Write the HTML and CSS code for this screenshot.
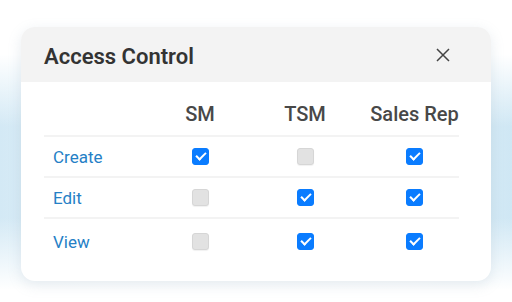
FILE: index.html
```html
<!doctype html>
<html>
	<head>
		<meta charset="utf-8" />
		<title>Access Control</title>
		<link rel="stylesheet" href="styles.css">
	</head>
	<body>
		<div class="stage">
			<div class="card">
				<header class="card_head">
					<h3>Access Control</h3>
					<button class="close" aria-label="Close">
						<svg width="14" height="14" viewBox="0 0 14 14"><path d="M1 1L13 13M13 1L1 13" stroke="#444" stroke-width="1.5" fill="none"/></svg>
					</button>
				</header>
				<div class="grid">
					<div class="cell head"></div>
					<div class="cell head mid">SM</div>
					<div class="cell head mid">TSM</div>
					<div class="cell head mid">Sales Rep</div>

					<div class="cell label">Create</div>
					<div class="cell mid"><span class="box on"></span></div>
					<div class="cell mid"><span class="box"></span></div>
					<div class="cell mid"><span class="box on"></span></div>

					<div class="cell label">Edit</div>
					<div class="cell mid"><span class="box"></span></div>
					<div class="cell mid"><span class="box on"></span></div>
					<div class="cell mid"><span class="box on"></span></div>

					<div class="cell label last">View</div>
					<div class="cell mid last"><span class="box"></span></div>
					<div class="cell mid last"><span class="box on"></span></div>
					<div class="cell mid last"><span class="box on"></span></div>
				</div>
			</div>
		</div>
	</body>
</html>
```
FILE: styles.css
```css
html, body {
	margin : 0;
	padding : 0;
}
body {
	width : 512px;
	height : 302px;
	overflow : hidden;
	font-family : Roboto, "Liberation Sans", sans-serif;
	background :
		linear-gradient(to bottom, rgba(255,255,255,1) 18%, rgba(255,255,255,0) 42%, rgba(255,255,255,0) 72%, rgba(255,255,255,1) 96%),
		linear-gradient(to right, #d3e9f5 0%, #e8f3fa 20%, #e8f3fa 80%, #cfe7f4 100%);
}
.stage {
	padding : 27px 21px 0 21px;
}
.card {
	width : 470px;
	height : 254px;
	background : #ffffff;
	border-radius : 14px;
	overflow : hidden;
	box-shadow : 0 4px 14px rgba(120, 150, 170, 0.18);
}
.card_head {
	height : 55px;
	background : #f3f3f3;
	display : flex;
	align-items : center;
	justify-content : space-between;
	padding : 0 41px 0 23px;
}
.card_head h3 {
	margin : 4px 0 0 0;
	font-size : 22px;
	font-weight : 600;
	color : #333333;
}
.close {
	border : none;
	background : none;
	padding : 0;
	width : 14px;
	height : 14px;
	display : flex;
	margin-top : 0;
}
.grid {
	margin : 0 32px 0 23px;
	display : grid;
	grid-template-columns : 116px 80px 130px 89px;
}
.cell {
	height : 39px;
	display : flex;
	align-items : center;
	border-bottom : 2px solid #f3f3f3;
}
.cell.head {
	height : 55px;
	font-size : 20px;
	font-weight : 500;
	color : #484848;
	padding-top : 11px;
	box-sizing : border-box;
}
.cell.last {
	border-bottom : none;
	padding-top : 3px;
}
.mid {
	justify-content : center;
}
.label {
	padding-left : 9px;
	font-size : 17px;
	color : #2580c6;
}
.box {
	width : 17px;
	height : 17px;
	box-sizing : border-box;
	border-radius : 3px;
	background : #e2e2e2;
	border : 1px solid #d6d6d6;
	box-shadow : 0 1px 1px rgba(0,0,0,0.06);
	position : relative;
}
.box.on {
	background : #0a7cff;
	border-color : #0a7cff;
	box-shadow : none;
}
.box.on::after {
	content : "";
	position : absolute;
	left : 5px;
	top : 1px;
	width : 4px;
	height : 8px;
	border : solid #ffffff;
	border-width : 0 2.5px 2.5px 0;
	transform : rotate(45deg);
}
```
